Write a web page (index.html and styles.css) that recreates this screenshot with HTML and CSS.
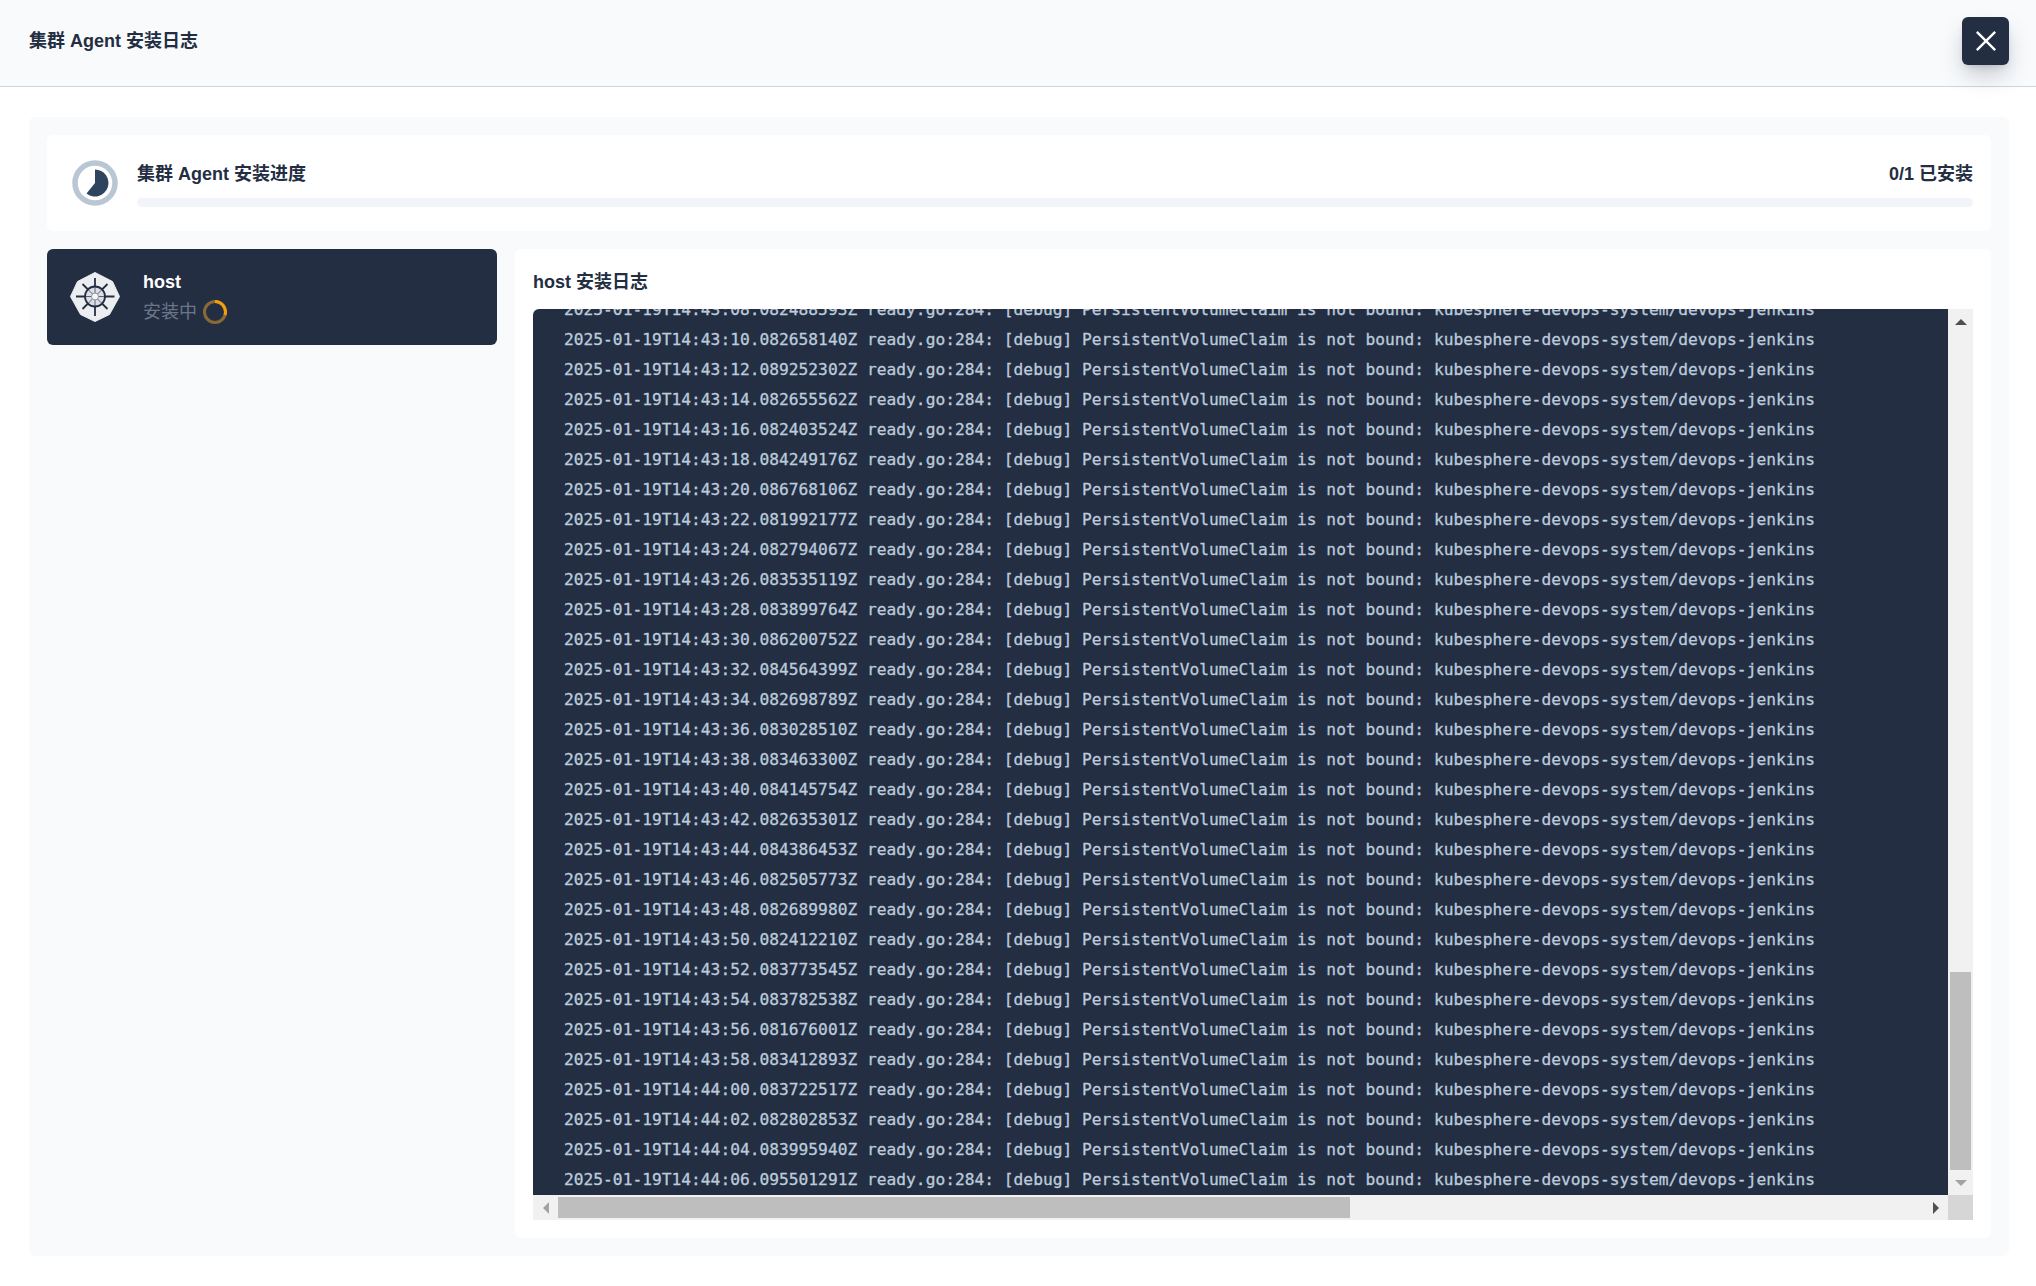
FILE: index.html
```html
<!DOCTYPE html>
<html lang="zh-CN">
<head>
<meta charset="utf-8">
<title>集群 Agent 安装日志</title>
<link rel="stylesheet" href="styles.css">
</head>
<body>
<header class="top">
  <h1 class="top-title">集群 Agent 安装日志</h1>
  <button class="close" aria-label="关闭">
    <svg class="close-icon" viewBox="0 0 24 24"><path d="M2 2 22 22M22 2 2 22"/></svg>
  </button>
</header>
<main class="panel">
  <section class="progress">
    <svg class="progress-icon" viewBox="0 0 46 46">
      <circle class="progress-ring" cx="23" cy="23" r="20"/>
      <path class="progress-pie" d="M23 9.5A13.5 13.5 0 1 1 14.5 33.5L23 23Z"/>
    </svg>
    <div class="progress-body">
      <div class="progress-head"><span>集群 Agent 安装进度</span><span>0/1 已安装</span></div>
      <div class="bar"></div>
    </div>
  </section>
  <div class="columns">
    <aside class="side">
      <div class="cluster">
        <svg class="k8s" viewBox="0 0 50 50">
          <path class="k8s-body" d="M25 .5 42.5 9.5 49.5 24.5 39.5 42.5 25 49.5 10.5 42.5 .5 24.5 7.5 9.5Z"/>
          <circle class="k8s-disc" cx="25" cy="24.5" r="10"/>
          <path class="k8s-inner" d="M25 15V34M15 24.5H35M18 17.5 32 31.5M32 17.5 18 31.5"/>
          <circle class="k8s-hub" cx="25" cy="24.5" r="3.5"/>
          <circle class="k8s-line" cx="25" cy="24.5" r="10"/>
          <path class="k8s-line" d="M25 6V14.5M25 34.5V44M6 24.5H15M35 24.5H44.5M12.5 12 18 17.5M37.5 12 32 17.5M12.5 37 18 31.5M37.5 37 32 31.5"/>
        </svg>
        <div class="cluster-text">
          <div class="cluster-name">host</div>
          <div class="cluster-status">安装中
            <svg class="spinner" viewBox="0 0 24 24">
              <circle class="spinner-track" cx="12" cy="12" r="10.5"/>
              <path class="spinner-arc" d="M12 1.5A10.5 10.5 0 0 1 22 15"/>
            </svg>
          </div>
        </div>
      </div>
    </aside>
    <section class="logs">
      <h2 class="logs-title">host 安装日志</h2>
      <div class="log-box">
        <div class="log-view">
        <pre class="log-text">2025-01-19T14:43:08.082488593Z ready.go:284: [debug] PersistentVolumeClaim is not bound: kubesphere-devops-system/devops-jenkins
2025-01-19T14:43:10.082658140Z ready.go:284: [debug] PersistentVolumeClaim is not bound: kubesphere-devops-system/devops-jenkins
2025-01-19T14:43:12.089252302Z ready.go:284: [debug] PersistentVolumeClaim is not bound: kubesphere-devops-system/devops-jenkins
2025-01-19T14:43:14.082655562Z ready.go:284: [debug] PersistentVolumeClaim is not bound: kubesphere-devops-system/devops-jenkins
2025-01-19T14:43:16.082403524Z ready.go:284: [debug] PersistentVolumeClaim is not bound: kubesphere-devops-system/devops-jenkins
2025-01-19T14:43:18.084249176Z ready.go:284: [debug] PersistentVolumeClaim is not bound: kubesphere-devops-system/devops-jenkins
2025-01-19T14:43:20.086768106Z ready.go:284: [debug] PersistentVolumeClaim is not bound: kubesphere-devops-system/devops-jenkins
2025-01-19T14:43:22.081992177Z ready.go:284: [debug] PersistentVolumeClaim is not bound: kubesphere-devops-system/devops-jenkins
2025-01-19T14:43:24.082794067Z ready.go:284: [debug] PersistentVolumeClaim is not bound: kubesphere-devops-system/devops-jenkins
2025-01-19T14:43:26.083535119Z ready.go:284: [debug] PersistentVolumeClaim is not bound: kubesphere-devops-system/devops-jenkins
2025-01-19T14:43:28.083899764Z ready.go:284: [debug] PersistentVolumeClaim is not bound: kubesphere-devops-system/devops-jenkins
2025-01-19T14:43:30.086200752Z ready.go:284: [debug] PersistentVolumeClaim is not bound: kubesphere-devops-system/devops-jenkins
2025-01-19T14:43:32.084564399Z ready.go:284: [debug] PersistentVolumeClaim is not bound: kubesphere-devops-system/devops-jenkins
2025-01-19T14:43:34.082698789Z ready.go:284: [debug] PersistentVolumeClaim is not bound: kubesphere-devops-system/devops-jenkins
2025-01-19T14:43:36.083028510Z ready.go:284: [debug] PersistentVolumeClaim is not bound: kubesphere-devops-system/devops-jenkins
2025-01-19T14:43:38.083463300Z ready.go:284: [debug] PersistentVolumeClaim is not bound: kubesphere-devops-system/devops-jenkins
2025-01-19T14:43:40.084145754Z ready.go:284: [debug] PersistentVolumeClaim is not bound: kubesphere-devops-system/devops-jenkins
2025-01-19T14:43:42.082635301Z ready.go:284: [debug] PersistentVolumeClaim is not bound: kubesphere-devops-system/devops-jenkins
2025-01-19T14:43:44.084386453Z ready.go:284: [debug] PersistentVolumeClaim is not bound: kubesphere-devops-system/devops-jenkins
2025-01-19T14:43:46.082505773Z ready.go:284: [debug] PersistentVolumeClaim is not bound: kubesphere-devops-system/devops-jenkins
2025-01-19T14:43:48.082689980Z ready.go:284: [debug] PersistentVolumeClaim is not bound: kubesphere-devops-system/devops-jenkins
2025-01-19T14:43:50.082412210Z ready.go:284: [debug] PersistentVolumeClaim is not bound: kubesphere-devops-system/devops-jenkins
2025-01-19T14:43:52.083773545Z ready.go:284: [debug] PersistentVolumeClaim is not bound: kubesphere-devops-system/devops-jenkins
2025-01-19T14:43:54.083782538Z ready.go:284: [debug] PersistentVolumeClaim is not bound: kubesphere-devops-system/devops-jenkins
2025-01-19T14:43:56.081676001Z ready.go:284: [debug] PersistentVolumeClaim is not bound: kubesphere-devops-system/devops-jenkins
2025-01-19T14:43:58.083412893Z ready.go:284: [debug] PersistentVolumeClaim is not bound: kubesphere-devops-system/devops-jenkins
2025-01-19T14:44:00.083722517Z ready.go:284: [debug] PersistentVolumeClaim is not bound: kubesphere-devops-system/devops-jenkins
2025-01-19T14:44:02.082802853Z ready.go:284: [debug] PersistentVolumeClaim is not bound: kubesphere-devops-system/devops-jenkins
2025-01-19T14:44:04.083995940Z ready.go:284: [debug] PersistentVolumeClaim is not bound: kubesphere-devops-system/devops-jenkins
2025-01-19T14:44:06.095501291Z ready.go:284: [debug] PersistentVolumeClaim is not bound: kubesphere-devops-system/devops-jenkins</pre>
        </div>
        <div class="vbar">
          <div class="sb-btn"><i class="arrow arrow-up"></i></div>
          <div class="vtrack"><div class="vthumb"></div></div>
          <div class="sb-btn"><i class="arrow arrow-down"></i></div>
        </div>
        <div class="hbar">
          <div class="sb-btn"><i class="arrow arrow-left"></i></div>
          <div class="htrack"><div class="hthumb"></div></div>
          <div class="sb-btn"><i class="arrow arrow-right"></i></div>
        </div>
        <div class="sb-corner"></div>
      </div>
    </section>
  </div>
</main>
</body>
</html>
```
FILE: styles.css
```css
* { box-sizing: border-box; }
html, body { margin: 0; height: 100%; }
body {
  display: flex;
  flex-direction: column;
  background: #fff;
  color: #232e43;
  font-family: "Liberation Sans", "Noto Sans CJK SC", sans-serif;
  font-size: 18px;
  line-height: 30px;
  overflow: hidden;
}
.top {
  flex: none;
  height: 87px;
  display: flex;
  align-items: center;
  justify-content: space-between;
  padding: 0 27px 4px 29px;
  background: #f8fafc;
  border-bottom: 1px solid #cbd5e1;
}
.top-title { margin: 0; font-size: 18px; font-weight: 700; }
.close {
  width: 47px;
  height: 48px;
  padding: 0;
  border: 0;
  border-radius: 6px;
  background: #232e43;
  display: flex;
  align-items: center;
  justify-content: center;
  box-shadow: 0 12px 24px -4px rgba(15,23,42,.25), 0 4px 8px -4px rgba(15,23,42,.2);
}
.close-icon { width: 22px; height: 22px; fill: none; stroke: #fff; stroke-width: 2.6; }
.panel {
  flex: 1;
  min-height: 0;
  margin: 30px 27px 30px 29px;
  padding: 18px;
  background: #f8fafc;
  border-radius: 6px;
  display: flex;
  flex-direction: column;
  gap: 18px;
}
.progress {
  flex: none;
  height: 96px;
  padding: 25px 18px 0 25px;
  background: #fff;
  border-radius: 6px;
  display: flex;
  align-items: flex-start;
  gap: 19px;
}
.progress-icon { flex: none; width: 46px; height: 46px; }
.progress-ring { fill: none; stroke: #b9c6d3; stroke-width: 5.5; }
.progress-pie { fill: #2f455e; }
.progress-body { flex: 1; padding-top: 1px; }
.progress-head {
  display: flex;
  justify-content: space-between;
  font-weight: 700;
  line-height: 27px;
  margin-bottom: 10px;
}
.bar { height: 9px; border-radius: 5px; background: #f1f5f9; }
.columns { flex: 1; min-height: 0; display: flex; gap: 18px; }
.side { flex: none; width: 450px; }
.cluster {
  height: 96px;
  padding: 18px 23px;
  background: #232e43;
  border-radius: 6px;
  display: flex;
  align-items: center;
  gap: 23px;
}
.k8s { flex: none; width: 50px; height: 50px; }
.k8s-body { fill: #ecedf0; stroke: #ecedf0; stroke-width: 1; stroke-linejoin: round; }
.k8s-disc { fill: #dcdee3; }
.k8s-inner { fill: none; stroke: #5b6476; stroke-width: 1; }
.k8s-hub { fill: #f4f5f6; stroke: #8d94a2; stroke-width: 1; }
.k8s-line { fill: none; stroke: #232e43; stroke-width: 1.8; }
.cluster-name { color: #fff; font-weight: 700; }
.cluster-status { color: #6b7688; display: flex; align-items: center; gap: 6px; }
.spinner { width: 24px; height: 24px; fill: none; stroke-width: 3; }
.spinner-track { stroke: #8a6a34; }
.spinner-arc { stroke: #f59e0b; }
.logs {
  flex: 1;
  min-width: 0;
  padding: 18px;
  background: #fff;
  border-radius: 6px;
  display: flex;
  flex-direction: column;
  gap: 12px;
}
.logs-title { margin: 0; font-size: 18px; font-weight: 600; }
.log-box {
  flex: 1;
  min-height: 0;
  display: grid;
  grid-template-columns: minmax(0, 1fr) 25px;
  grid-template-rows: minmax(0, 1fr) 25px;
}
.log-view {
  overflow: hidden;
  display: flex;
  flex-direction: column-reverse;
  background: #232e43;
  border-top-left-radius: 6px;
}
.log-text {
  flex: none;
  margin: 0;
  padding: 0 0 0 31px;
  color: #bccbdb;
  font-family: "DejaVu Sans Mono", monospace;
  font-size: 16.24px;
  line-height: 30px;
  white-space: pre;
  -webkit-text-stroke: .3px #bccbdb;
}
.vbar, .hbar { display: flex; background: #f1f1f1; }
.vbar { flex-direction: column; }
.sb-btn { flex: none; width: 25px; height: 25px; display: flex; align-items: center; justify-content: center; }
.vtrack { flex: 1; display: flex; flex-direction: column; justify-content: flex-end; padding: 0 2px; }
.vthumb { height: 198px; background: #bebebe; }
.htrack { flex: 1; padding: 2px 0; }
.hthumb { width: 792px; height: 21px; background: #bebebe; }
.sb-corner { background: #d6d6d6; }
.arrow { display: block; width: 0; height: 0; border-style: solid; border-color: transparent; }
.arrow-up { border-width: 0 6px 6px; border-bottom-color: #505050; }
.arrow-down { border-width: 6px 6px 0; border-top-color: #a3a3a3; }
.arrow-left { border-width: 6px 6px 6px 0; border-right-color: #a3a3a3; }
.arrow-right { border-width: 6px 0 6px 6px; border-left-color: #505050; }
```
